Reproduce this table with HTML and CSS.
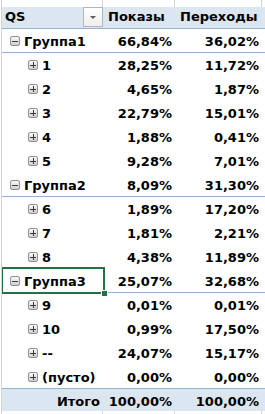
FILE: index.html
```html
<!DOCTYPE html>
<html>

<head>
    <meta charset="utf-8">
    <link rel="stylesheet" href="styles.css">
    <title>QS</title>
</head>

<body>
    <div class="sheet">
        <!-- empty row above the pivot -->
        <div class="strip">
            <div></div>
            <div></div>
            <div></div>
        </div>

        <div class="pivot">
            <div class="row head">
                <div class="cell label-head">QS <span class="filter-btn"></span></div>
                <div class="cell">Показы</div>
                <div class="cell">Переходы</div>
            </div>

            <div class="row group">
                <div class="cell lvl1"><span class="tog minus"></span>Группа1</div>
                <div class="cell num">66,84%</div>
                <div class="cell num">36,02%</div>
            </div>
            <div class="row">
                <div class="cell lvl2"><span class="tog plus"></span>1</div>
                <div class="cell num">28,25%</div>
                <div class="cell num">11,72%</div>
            </div>
            <div class="row">
                <div class="cell lvl2"><span class="tog plus"></span>2</div>
                <div class="cell num">4,65%</div>
                <div class="cell num">1,87%</div>
            </div>
            <div class="row">
                <div class="cell lvl2"><span class="tog plus"></span>3</div>
                <div class="cell num">22,79%</div>
                <div class="cell num">15,01%</div>
            </div>
            <div class="row">
                <div class="cell lvl2"><span class="tog plus"></span>4</div>
                <div class="cell num">1,88%</div>
                <div class="cell num">0,41%</div>
            </div>
            <div class="row">
                <div class="cell lvl2"><span class="tog plus"></span>5</div>
                <div class="cell num">9,28%</div>
                <div class="cell num">7,01%</div>
            </div>

            <div class="row group">
                <div class="cell lvl1"><span class="tog minus"></span>Группа2</div>
                <div class="cell num">8,09%</div>
                <div class="cell num">31,30%</div>
            </div>
            <div class="row">
                <div class="cell lvl2"><span class="tog plus"></span>6</div>
                <div class="cell num">1,89%</div>
                <div class="cell num">17,20%</div>
            </div>
            <div class="row">
                <div class="cell lvl2"><span class="tog plus"></span>7</div>
                <div class="cell num">1,81%</div>
                <div class="cell num">2,21%</div>
            </div>
            <div class="row">
                <div class="cell lvl2"><span class="tog plus"></span>8</div>
                <div class="cell num">4,38%</div>
                <div class="cell num">11,89%</div>
            </div>

            <div class="row group">
                <div class="cell lvl1 selected"><span class="tog minus"></span>Группа3</div>
                <div class="cell num">25,07%</div>
                <div class="cell num">32,68%</div>
            </div>
            <div class="row">
                <div class="cell lvl2"><span class="tog plus"></span>9</div>
                <div class="cell num">0,01%</div>
                <div class="cell num">0,01%</div>
            </div>
            <div class="row">
                <div class="cell lvl2"><span class="tog plus"></span>10</div>
                <div class="cell num">0,99%</div>
                <div class="cell num">17,50%</div>
            </div>
            <div class="row">
                <div class="cell lvl2"><span class="tog plus"></span>--</div>
                <div class="cell num">24,07%</div>
                <div class="cell num">15,17%</div>
            </div>
            <div class="row group">
                <div class="cell lvl2"><span class="tog plus"></span>(пусто)</div>
                <div class="cell num">0,00%</div>
                <div class="cell num">0,00%</div>
            </div>

            <div class="row total">
                <div class="cell num">Итого</div>
                <div class="cell num">100,00%</div>
                <div class="cell num">100,00%</div>
            </div>
        </div>

        <!-- empty row below the pivot -->
        <div class="strip bottom">
            <div></div>
            <div></div>
            <div></div>
        </div>
    </div>
</body>

</html>
```

FILE: styles.css
```css
body {
    margin: 0;
    padding: 0;
    background-color: #fff;
    font-family: "DejaVu Sans", Verdana, sans-serif;
    font-size: 13px;
    font-weight: bold;
    color: #000;
}

.sheet {
    width: 264px;
    height: 414px;
    margin-left: 1px;
    border-left: 1px solid #d4d4d4;
    overflow: hidden;
}

/* grid lines of the plain cells around the pivot */
.strip {
    display: grid;
    grid-template-columns: 101px 72px 87px;
    height: 7px;
}

.strip.bottom {
    height: 3px;
}

.strip div {
    border-right: 1px solid #d4d4d4;
}

.row {
    display: grid;
    grid-template-columns: 101px 72px 87px;
    height: 24px;
    box-sizing: border-box;
    border-bottom: 1px solid transparent;
}

.cell {
    padding: 4px 3px 0;
    line-height: 17px;
    white-space: nowrap;
}

.num {
    text-align: right;
}

.row.head {
    height: 22px;
    background-color: #dce6f1;
    border-bottom-color: #95b3d7;
}

.row.head .cell {
    padding-top: 1px;
    padding-left: 5px;
}

.row.head .label-head {
    display: flex;
    align-items: flex-start;
    padding-left: 3px;
    padding-right: 0;
}

.filter-btn {
    display: flex;
    justify-content: center;
    align-items: center;
    width: 20px;
    height: 20px;
    box-sizing: border-box;
    margin-top: -1px;
    margin-left: auto;
    border: 1px solid #b4b4b4;
    background: linear-gradient(#ffffff, #eeeeee);
}

.filter-btn::after {
    content: "";
    border-left: 3px solid transparent;
    border-right: 3px solid transparent;
    border-top: 3px solid #5c5c5c;
}

.row.group {
    border-bottom-color: #95b3d7;
}

.row.total {
    height: 22px;
    background-color: #dce6f1;
}

.lvl1 {
    padding-left: 8px;
}

.lvl2 {
    padding-left: 26px;
}

/* expand / collapse buttons */
.tog {
    position: relative;
    display: inline-block;
    width: 10px;
    height: 10px;
    box-sizing: border-box;
    margin-right: 4px;
    border: 1px solid #8f9090;
    border-radius: 2px;
    background: linear-gradient(#f7f7f7, #cfd0d0);
}

.tog::before,
.tog.plus::after {
    content: "";
    position: absolute;
    background-color: #3a3a3a;
}

.tog::before {
    left: 1px;
    top: 3.5px;
    width: 6px;
    height: 1px;
}

.tog.plus::after {
    left: 3.5px;
    top: 1px;
    width: 1px;
    height: 6px;
}

/* active cell frame */
.selected {
    position: relative;
}

.selected::after {
    content: "";
    position: absolute;
    top: -2px;
    left: -1px;
    right: -2px;
    bottom: -2px;
    border: 2px solid #217346;
}

.selected::before {
    content: "";
    position: absolute;
    right: -5px;
    bottom: -5px;
    width: 5px;
    height: 5px;
    border: 1px solid #fff;
    background-color: #217346;
    z-index: 1;
}
```
